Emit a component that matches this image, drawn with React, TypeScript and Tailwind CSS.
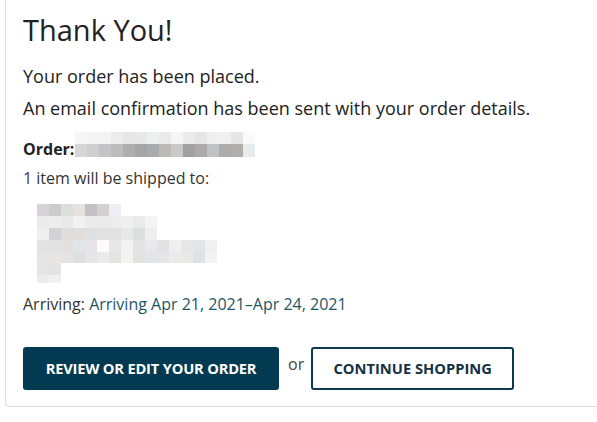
const orderBlur: string[][] = [
  ["#f6f6f6", "#f4f4f4", "#f3f3f3", "#ececec", "#e6e6e6", "#e8e8e8", "#eef0ef", "#eaeaea", "#f4f5f4", "#ebebea", "#e5e5e5", "#eeeff1", "#f1f0ef", "#e6e6e6", "#fafafa"],
  ["#d6d6d6", "#cfcfcf", "#c4c3c5", "#bcbcbc", "#b0afaf", "#a6a5a4", "#a7abae", "#bcbbba", "#c9c9c9", "#a2a1a0", "#acaba9", "#bfc2c5", "#adacaa", "#b1aeab", "#e6ebee"],
];

const addressBlur: string[][] = [
  ["#d8d3d8", "#cbcbcd", "#dadfdb", "#e4e3e2", "#c4c1c6", "#d2d0d0", "#eeeef5"],
  ["#ebebeb", "#ededed", "#e8eae8", "#f2f2f4", "#ebebeb", "#ebebeb", "#ebeceb", "#efefef", "#e9ebea", "#f4f4f4"],
  ["#f1eef2", "#d2d1d7", "#dfdcdc", "#e1dddd", "#dfe0e4", "#e2e0e1", "#e2e1e2", "#e6e9e9", "#dcdddd", "#eeeeee"],
  ["#e5e2e2", "#e0e1e2", "#e2dfdd", "#e1e5e6", "#e6e4e6", "#fcfbf9", "#e5e8e7", "#f2f2f1", "#e2e3e5", "#e8e9ea", "#e3e1e2", "#eeeff1", "#e8e7e6", "#e1e5e8", "#f0f0f2"],
  ["#e6e4e4", "#e8e5e5", "#e6e4e2", "#dde0df", "#e6e5e7", "#ebebeb", "#e1e4e1", "#f2f2f2", "#e4e2e0", "#e2e5e8", "#e6e5e8", "#ebeaeb", "#eae9e8", "#dee2e4", "#f2f2f4"],
  ["#e5e6e3", "#e4e4e4"],
  ["#ececec", "#f1f1f1"],
];

function Pixelated({ rows, heights }: { rows: string[][]; heights: number[] }) {
  return (
    <div className="flex flex-col">
      {rows.map((row, i) => (
        <div key={i} className="flex">
          {row.map((c, j) => (
            <div key={j} className="w-[12px]" style={{ backgroundColor: c, height: heights[i] }} />
          ))}
        </div>
      ))}
    </div>
  );
}

export default function App() {
  return (
    <div
      className="h-[422px] w-[597px] overflow-hidden bg-white text-[#222]"
      style={{ fontFamily: '"Open Sans", "Liberation Sans", sans-serif' }}
    >
      <div className="ml-[5px] w-[620px] rounded-b-[4px] border-x border-b border-[#dcdcdc] pl-[17px] pb-[16px]">
        <h1 className="pt-[11px] text-[29px] font-normal leading-[38px] text-[#222]">Thank You!</h1>

        <p className="mt-[15px] text-[18px] leading-[24px]">Your order has been placed.</p>
        <p className="mt-[8px] text-[18px] leading-[24px]">
          An email confirmation has been sent with your order details.
        </p>

        <div className="mt-[18px] flex items-end">
          <span className="text-[16px] font-bold leading-[22px]">Order:</span>
          <div className="-mt-[6px] mb-[3px] ml-[1px]">
            <Pixelated rows={orderBlur} heights={[12, 13]} />
          </div>
        </div>

        <p className="mt-[7px] text-[16px] leading-[22px] text-[#333]">
          <span className="text-[#4b2c82]">1</span> item will be shipped to:
        </p>

        <div className="mt-[15px] ml-[14px]">
          <Pixelated rows={addressBlur} heights={[12, 12, 12, 12, 11, 12, 8]} />
        </div>

        <p className="mt-[10px] text-[16px] leading-[22px] text-[#333]">
          Arriving: <span className="text-[#1c5766]">Arriving Apr 21, 2021–Apr 24, 2021</span>
        </p>

        <div className="mt-[32px] flex items-start">
          <button
            type="button"
            className="h-[43px] w-[256px] rounded-[3px] bg-[#023a52] text-[14.7px] font-bold tracking-[-0.2px] text-white"
          >
            REVIEW OR EDIT YOUR ORDER
          </button>
          <span className="ml-[9px] mr-[7px] mt-[6px] text-[16px] leading-[22px] text-[#444]">or</span>
          <button
            type="button"
            className="h-[43px] w-[203px] rounded-[3px] border-2 border-[#0b3a50] bg-white text-[14.7px] font-bold text-[#143245]"
          >
            CONTINUE SHOPPING
          </button>
        </div>
      </div>
    </div>
  );
}
